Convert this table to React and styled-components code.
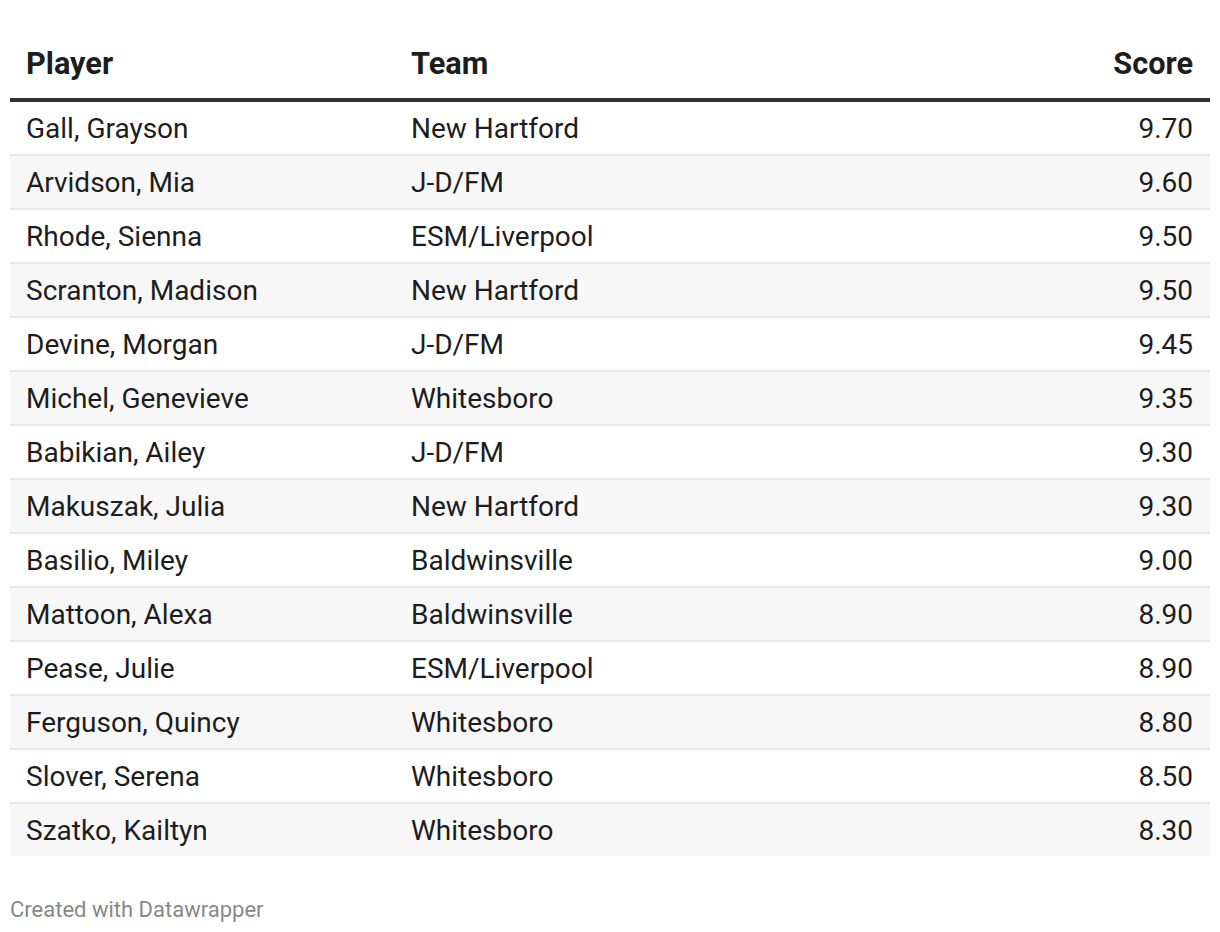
import React from "react";
import styled, { createGlobalStyle } from "styled-components";

const GlobalStyle = createGlobalStyle`
	body {
		margin: 0;
		background: #ffffff;
		font-family: Roboto, "Liberation Sans", sans-serif;
		color: #1d1d1d;
	}
`;

const Page = styled.div`
	padding: 32px 10px 0 10px;
	width: 1200px;
`;

const Table = styled.div`
	display: flex;
	flex-direction: column;
`;

const Row = styled.div`
	display: grid;
	grid-template-columns: 385px 1fr 200px;
	align-items: center;
	box-sizing: border-box;
	height: ${(p) => (p.last ? "52px" : "54px")};
	padding-top: 1px;
	background: ${(p) => (p.striped ? "#f7f7f7" : "#ffffff")};
	border-bottom: ${(p) => (p.last ? "none" : "2px solid #e6e6e6")};
`;

const HeadRow = styled.div`
	display: grid;
	grid-template-columns: 385px 1fr 200px;
	padding: 16px 0 18px 0;
	border-bottom: 4px solid #333333;
`;

const Cell = styled.div`
	padding: 0 ${(p) => (p.right ? "17px" : "16px")};
	font-size: ${(p) => (p.head ? "30.7px" : "28px")};
	line-height: 32px;
	font-weight: ${(p) => (p.head ? 700 : 400)};
	text-align: ${(p) => (p.right ? "right" : "left")};
	white-space: nowrap;
`;

const Footer = styled.div`
	margin-top: 41px;
	font-size: 22px;
	color: #888888;
`;

const players = [
	["Gall, Grayson", "New Hartford", "9.70"],
	["Arvidson, Mia", "J-D/FM", "9.60"],
	["Rhode, Sienna", "ESM/Liverpool", "9.50"],
	["Scranton, Madison", "New Hartford", "9.50"],
	["Devine, Morgan", "J-D/FM", "9.45"],
	["Michel, Genevieve", "Whitesboro", "9.35"],
	["Babikian, Ailey", "J-D/FM", "9.30"],
	["Makuszak, Julia", "New Hartford", "9.30"],
	["Basilio, Miley", "Baldwinsville", "9.00"],
	["Mattoon, Alexa", "Baldwinsville", "8.90"],
	["Pease, Julie", "ESM/Liverpool", "8.90"],
	["Ferguson, Quincy", "Whitesboro", "8.80"],
	["Slover, Serena", "Whitesboro", "8.50"],
	["Szatko, Kailtyn", "Whitesboro", "8.30"],
];

function App() {
	return (
		<Page>
			<GlobalStyle />
			<Table>
				<HeadRow>
					<Cell head>Player</Cell>
					<Cell head>Team</Cell>
					<Cell head right>Score</Cell>
				</HeadRow>
				{players.map(([name, team, score], i) => (
					<Row key={name} striped={i % 2 === 1} last={i === players.length - 1}>
						<Cell>{name}</Cell>
						<Cell>{team}</Cell>
						<Cell right>{score}</Cell>
					</Row>
				))}
			</Table>
			<Footer>Created with Datawrapper</Footer>
		</Page>
	);
}

export default App;
